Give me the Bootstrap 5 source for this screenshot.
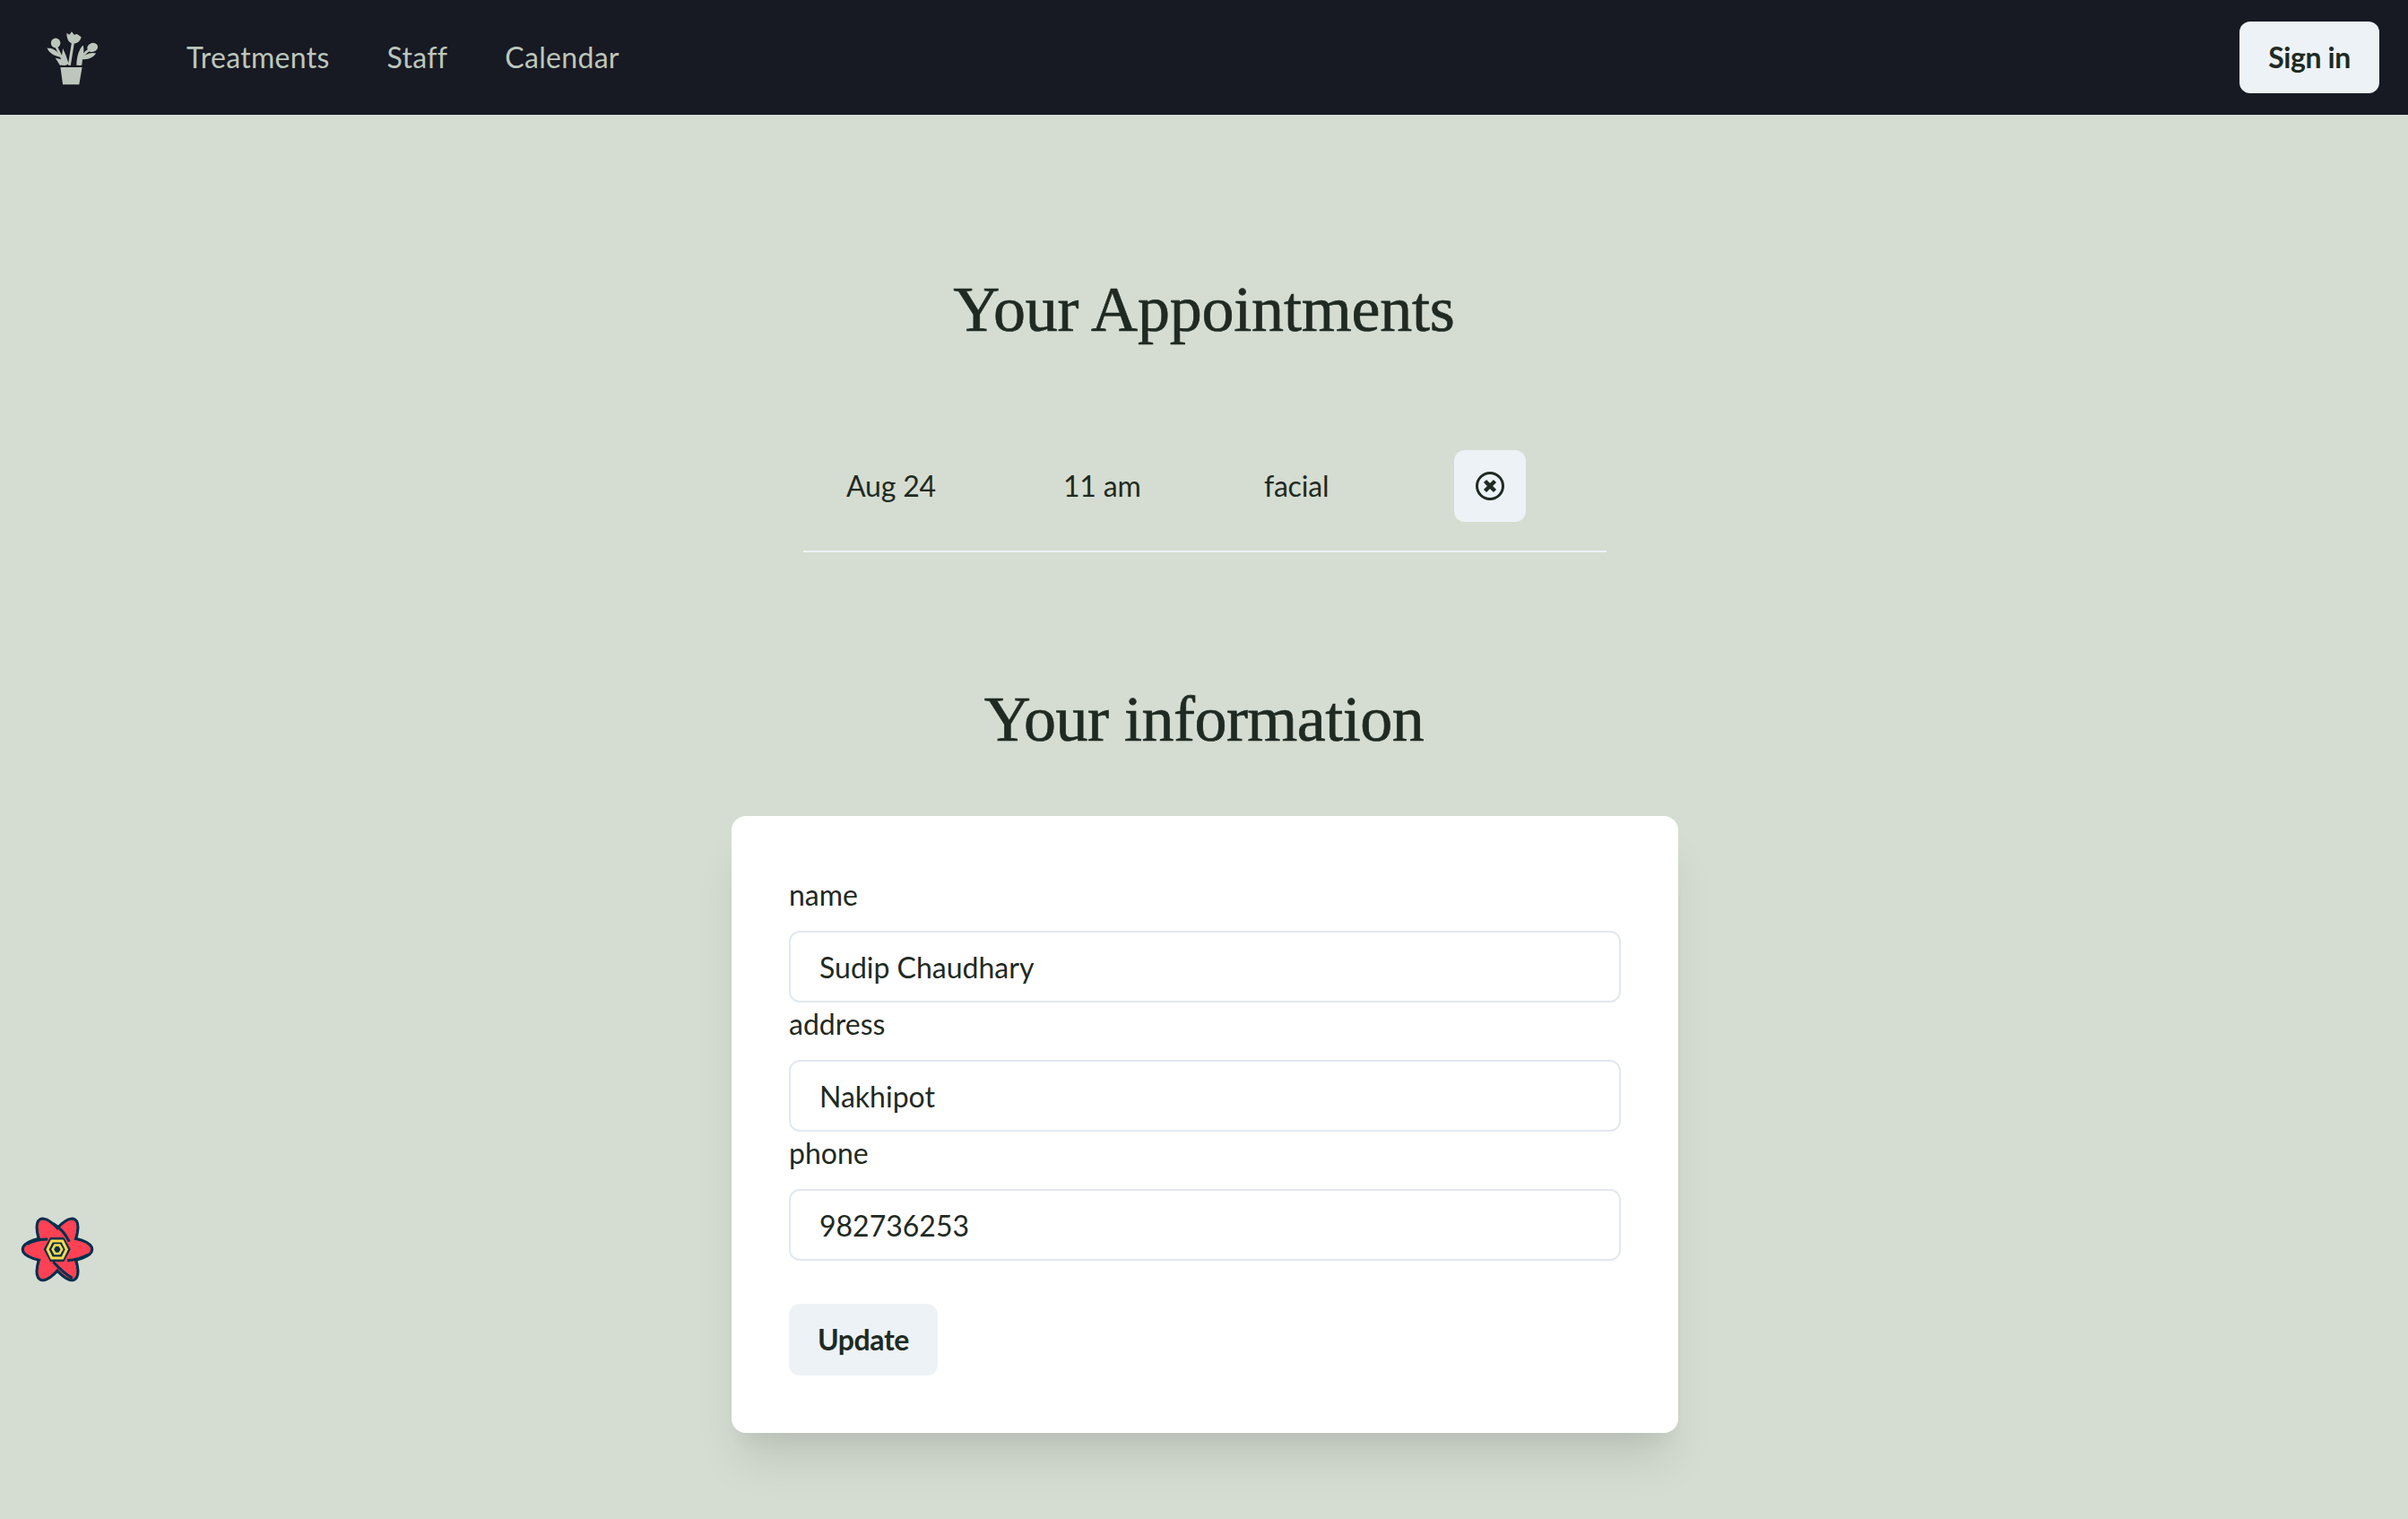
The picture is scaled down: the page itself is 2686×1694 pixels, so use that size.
<!DOCTYPE html>
<html lang="en">
  <head>
    <meta charset="UTF-8" />
    <meta name="viewport" content="width=device-width, initial-scale=1.0" />
    <title>Lazy Days Spa</title>
    <link href="https://cdn.jsdelivr.net/npm/bootstrap@5.3.2/dist/css/bootstrap.min.css" rel="stylesheet" />
    <style>
      body {
        background: #d5ddd2;
        color: #1f2a22;
        font-family: Lato, "Liberation Sans", sans-serif;
        font-size: 32px;
        line-height: 48px;
        min-height: 1694px;
      }
      .top-bar {
        background: #171923;
        height: 128px;
        padding: 0 32px 0 50px;
      }
      .top-logo {
        width: 60px;
        height: 63px;
        fill: #bcc6bb;
        stroke: #bcc6bb;
      }
      .top-links {
        margin-left: 98px;
        gap: 64px;
      }
      .top-links a {
        color: #bcc6bb;
        letter-spacing: 0.3px;
        text-decoration: none;
      }
      .soft-btn {
        background: #edf2f7;
        border: 0;
        border-radius: 12px;
        color: #1f2a22;
        font-size: 32px;
        font-weight: 700;
        height: 80px;
        line-height: 80px;
        padding: 0 32px;
        letter-spacing: -0.4px;
      }
      .page-title {
        font-family: "Liberation Serif", serif;
        font-size: 72px;
        line-height: 86px;
        font-weight: 400;
        letter-spacing: -0.2px;
        margin: 0;
        text-align: center;
        -webkit-text-stroke: 0.7px #1f2a22;
      }
      .title-first {
        margin-top: 174px;
        margin-bottom: 82px;
      }
      .title-second {
        letter-spacing: -0.5px;
        margin-top: 143px;
        margin-bottom: 65px;
      }
      .appt-table {
        width: 896px;
        margin-left: 896px;
        border-collapse: collapse;
        table-layout: fixed;
      }
      .appt-table td {
        padding: 32px 48px;
        border-bottom: 2px solid #edf2f7;
        letter-spacing: -0.2px;
        white-space: nowrap;
      }
      .appt-date { width: 242px; }
      .appt-time { width: 224px; }
      .appt-kind { width: 212px; }
      .appt-action { width: 218px; }
      .icon-btn {
        width: 80px;
        padding: 0;
      }
      .info-card {
        background: #fff;
        border-radius: 16px;
        box-shadow: 0 40px 50px -10px rgba(0, 0, 0, 0.1), 0 20px 20px -10px rgba(0, 0, 0, 0.04);
        margin-left: 816px;
        padding: 64px;
        width: 1056px;
      }
      .info-card label {
        display: block;
        margin-bottom: 16px;
      }
      .info-input {
        border: 2px solid #e2e8f0;
        border-radius: 12px;
        color: #1f2a22;
        display: block;
        font-size: 32px;
        height: 80px;
        padding: 0 32px;
        width: 100%;
      }
      .update-btn {
        margin-top: 48px;
      }
      .devtools-flower {
        position: fixed;
        left: 20px;
        top: 1354px;
        width: 88px;
        height: 80px;
      }
    </style>
  </head>
  <body>
    <nav class="top-bar d-flex align-items-center justify-content-between">
      <div class="d-flex align-items-center">
        <svg class="top-logo" viewBox="90 35 180 190" aria-label="logo">
          <path stroke="none" d="M142 162H215L205 220H150Z" />
          <path stroke="none" d="M163 46L172 52L180 42L188 52L198 50L212 60C210 72 200 82 186 82C172 82 163 68 163 46Z" />
          <path fill="none" stroke-width="9" d="M184 80L172 155" />
          <circle stroke="none" cx="126" cy="80" r="16" />
          <path fill="none" stroke-width="8" d="M128 92C135 110 150 130 155 155" />
          <path stroke="none" d="M97 97C115 97 135 106 142 128C125 124 105 117 97 97Z" />
          <path stroke="none" d="M125 130L145 135L150 98L160 120L170 150L160 155L140 155Z" />
          <ellipse stroke="none" cx="250" cy="95" rx="18" ry="15" transform="rotate(-20 250 95)" />
          <path fill="none" stroke-width="8" d="M240 103C222 112 210 130 205 155" />
          <path stroke="none" d="M262 115C245 110 225 116 210 134C230 138 250 132 262 115Z" />
          <path stroke="none" d="M218 88C205 100 197 125 196 155L214 155C217 125 224 105 218 88Z" />
        </svg>
        <div class="top-links d-flex">
          <a href="#">Treatments</a>
          <a href="#">Staff</a>
          <a href="#">Calendar</a>
        </div>
      </div>
      <button class="soft-btn" type="button">Sign in</button>
    </nav>

    <main>
      <h1 class="page-title title-first">Your Appointments</h1>
      <table class="appt-table">
        <tbody>
          <tr>
            <td class="appt-date">Aug 24</td>
            <td class="appt-time">11 am</td>
            <td class="appt-kind">facial</td>
            <td class="appt-action">
              <button class="soft-btn icon-btn d-flex align-items-center justify-content-center" type="button" aria-label="cancel">
                <svg width="32" height="32" viewBox="0 0 32 32" fill="none" stroke="#1f2a22">
                  <circle cx="16" cy="16" r="14.500" stroke-width="3" />
                  <path d="M10.500 10.500l11 11M21.500 10.500l-11 11" stroke-width="4.500" />
                </svg>
              </button>
            </td>
          </tr>
        </tbody>
      </table>

      <h1 class="page-title title-second">Your information</h1>
      <form class="info-card">
        <label for="userName">name</label>
        <input class="info-input" id="userName" value="Sudip Chaudhary" />
        <label for="userAddress">address</label>
        <input class="info-input" id="userAddress" value="Nakhipot" />
        <label for="userPhone">phone</label>
        <input class="info-input" id="userPhone" value="982736253" />
        <button class="soft-btn update-btn" type="button">Update</button>
      </form>
    </main>

    <svg class="devtools-flower" viewBox="0 0 264 240" aria-label="devtools">
      <g fill="#ff4154" stroke="#00304d" stroke-width="10">
        <ellipse cx="132" cy="118" rx="116" ry="42" transform="rotate(-60 132 118)" />
        <ellipse cx="132" cy="118" rx="116" ry="42" />
        <ellipse cx="132" cy="118" rx="116" ry="42" transform="rotate(60 132 118)" />
      </g>
      <g fill="#ff4154">
        <ellipse cx="132" cy="118" rx="111" ry="37" transform="rotate(-60 132 118)" />
        <ellipse cx="132" cy="118" rx="111" ry="37" />
        <ellipse cx="132" cy="118" rx="111" ry="37" transform="rotate(60 132 118)" />
      </g>
      <path d="M30 100Q62 84 100 84M118 32Q150 50 172 92M234 136Q205 152 165 155M182 214Q155 200 118 160" fill="none" stroke="#00304d" stroke-width="9" />
      <path d="M86 118L108 78H154L176 118L154 159H108Z" fill="#00304d" />
      <path d="M99 118L113 90H149L163 118L149 147H113Z" fill="none" stroke="#ffd94c" stroke-width="9" />
      <path d="M116 118L124 104H139L147 118L139 132H124Z" fill="none" stroke="#ffd94c" stroke-width="8" />
    </svg>

    <script src="https://cdn.jsdelivr.net/npm/bootstrap@5.3.2/dist/js/bootstrap.bundle.min.js"></script>
  </body>
</html>
